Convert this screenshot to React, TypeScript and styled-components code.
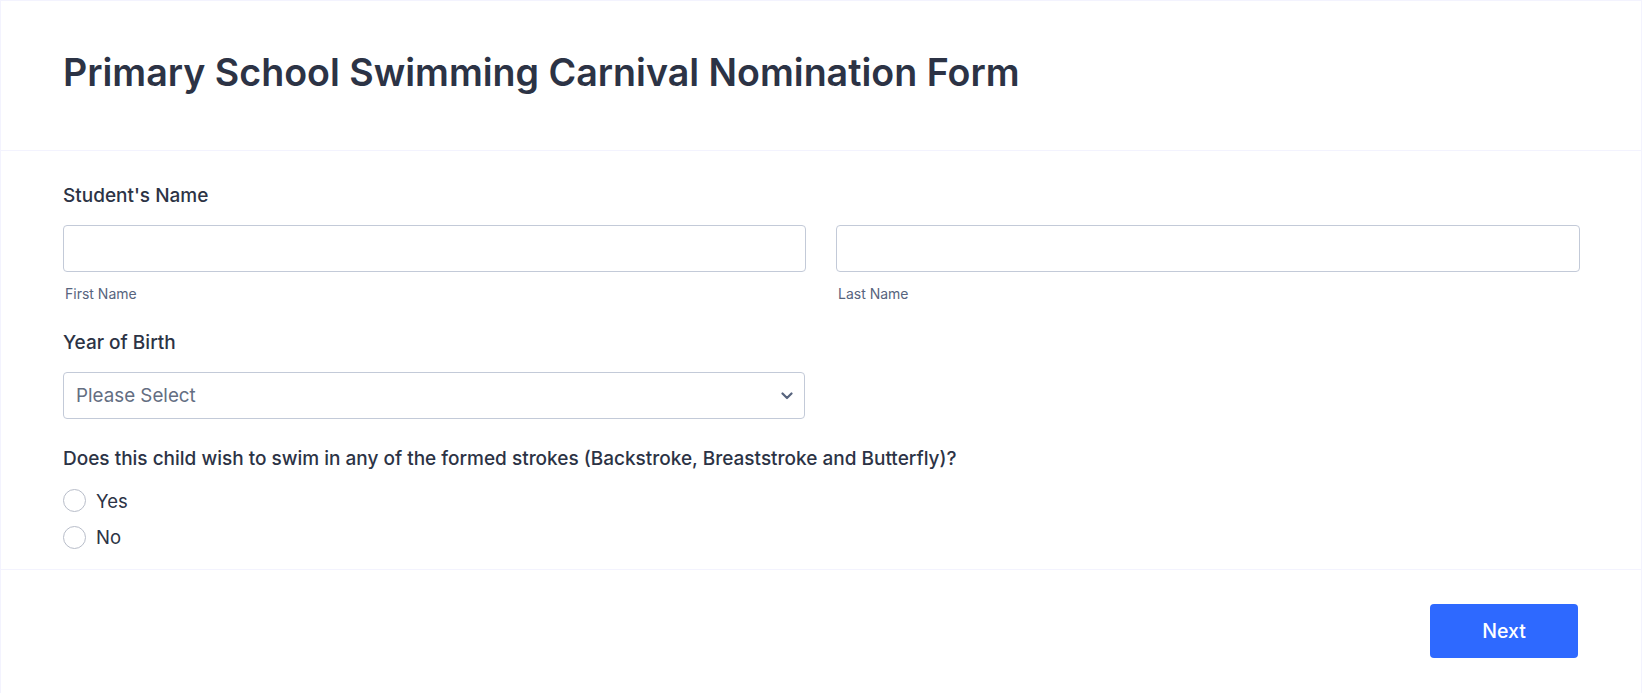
import React from "react";
import styled, { createGlobalStyle } from "styled-components";

const GlobalStyle = createGlobalStyle`
  html, body {
    margin: 0;
    padding: 0;
    background: #ffffff;
  }
  body {
    font-family: Inter, "Noto Sans", sans-serif;
    color: #2c3345;
  }
  * { box-sizing: border-box; }
`;

const Card = styled.div`
  width: 1642px;
  min-height: 693px;
  border-top: 1px solid #f3f3fe;
  border-left: 1px solid #f3f3fe;
  border-right: 1px solid #f3f3fe;
  background: #fff;
  display: flex;
  flex-direction: column;
`;

const Header = styled.header`
  padding: 49px 62px 0 62px;
  height: 150px;
  border-bottom: 1px solid #f3f3fe;
`;

const Title = styled.h1`
  margin: 0;
  font-size: 37.6px;
  line-height: 46px;
  font-weight: 600;
  color: #2c3345;
`;

const Body = styled.section`
  padding: 33px 62px 20px 62px;
  display: flex;
  flex-direction: column;
  border-bottom: 1px solid #f3f3fe;
`;

const Field = styled.div<{ $gapAfter?: number }>`
  display: flex;
  flex-direction: column;
  margin-bottom: ${(p) => p.$gapAfter ?? 0}px;
`;

const Label = styled.label<{ $gap?: number }>`
  font-size: 19px;
  line-height: 24px;
  font-weight: 500;
  color: #2c3345;
  margin-bottom: ${(p) => p.$gap ?? 17}px;
`;

const NameRow = styled.div`
  display: grid;
  grid-template-columns: 743px 744px;
  column-gap: 30px;
`;

const NameCol = styled.div`
  display: flex;
  flex-direction: column;
`;

const TextInput = styled.input`
  height: 47px;
  width: 100%;
  border: 1px solid #c3cad8;
  border-radius: 4px;
  background: #fff;
  padding: 0 12px;
  font-family: inherit;
  font-size: 18px;
  color: #2c3345;
  outline: none;
`;

const SubLabel = styled.span`
  margin-top: 13px;
  font-size: 14px;
  line-height: 18px;
  color: #57647e;
  padding-left: 2px;
`;

const SelectBox = styled.div`
  position: relative;
  width: 742px;
  height: 47px;
  border: 1px solid #c3cad8;
  border-radius: 4px;
  display: flex;
  align-items: center;
  padding: 0 12px;
  font-size: 18.8px;
  color: #646e82;
`;

const Chevron = styled.svg`
  position: absolute;
  right: 11px;
  top: 50%;
  transform: translateY(-50%);
`;

const RadioList = styled.div`
  display: flex;
  flex-direction: column;
  gap: 12.5px;
`;

const RadioRow = styled.label`
  display: flex;
  align-items: center;
  gap: 10px;
  height: 24px;
  font-size: 18.5px;
  color: #2c3345;
`;

const RadioCircle = styled.span`
  width: 23px;
  height: 23px;
  border-radius: 50%;
  border: 1px solid #b8bdc9;
  background: #fff;
  flex: none;
`;

const Footer = styled.footer`
  padding: 34px 63px 34px 62px;
  display: flex;
  justify-content: flex-end;
`;

const NextButton = styled.button`
  width: 148px;
  height: 54px;
  border: none;
  border-radius: 4px;
  background: #2e69ff;
  color: #fff;
  font-family: inherit;
  font-size: 19.5px;
  font-weight: 500;
  cursor: pointer;
`;

export default function App() {
  return (
    <>
      <GlobalStyle />
      <Card>
        <Header>
          <Title>Primary School Swimming Carnival Nomination Form</Title>
        </Header>
        <Body>
          <Field $gapAfter={28}>
            <Label>Student's Name</Label>
            <NameRow>
              <NameCol>
                <TextInput type="text" />
                <SubLabel>First Name</SubLabel>
              </NameCol>
              <NameCol>
                <TextInput type="text" />
                <SubLabel>Last Name</SubLabel>
              </NameCol>
            </NameRow>
          </Field>
          <Field $gapAfter={28}>
            <Label>Year of Birth</Label>
            <SelectBox>
              Please Select
              <Chevron width="12" height="8" viewBox="0 0 12 8" fill="none">
                <path d="M1.5 1.5L6 6L10.5 1.5" stroke="#57647e" strokeWidth="2.2" strokeLinecap="round" strokeLinejoin="round" />
              </Chevron>
            </SelectBox>
          </Field>
          <Field>
            <Label $gap={17.5}>
              Does this child wish to swim in any of the formed strokes (Backstroke, Breaststroke and Butterfly)?
            </Label>
            <RadioList>
              <RadioRow>
                <RadioCircle />
                Yes
              </RadioRow>
              <RadioRow>
                <RadioCircle />
                No
              </RadioRow>
            </RadioList>
          </Field>
        </Body>
        <Footer>
          <NextButton>Next</NextButton>
        </Footer>
      </Card>
    </>
  );
}
